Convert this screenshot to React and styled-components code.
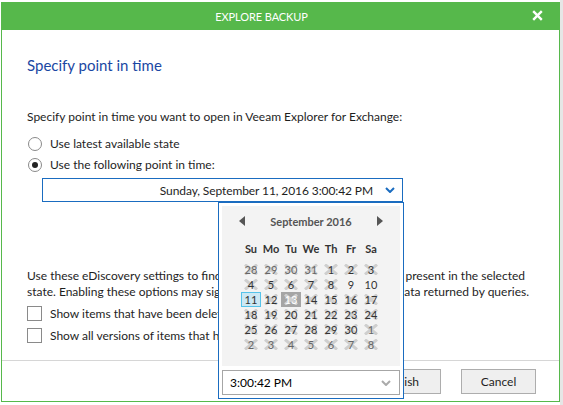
import React from 'react';
import styled, { createGlobalStyle } from 'styled-components';

const GlobalStyle = createGlobalStyle`
  html, body { margin: 0; padding: 0; }
  body {
    font-family: "Segoe UI", Lato, "Noto Sans", sans-serif;
    background: #fff;
  }
`;

const Page = styled.div`
  position: relative;
  width: 563px;
  height: 405px;
  overflow: hidden;
  background: linear-gradient(to right, #fff 0, #fff 560px, #e6e6e6 560px);
  padding: 2px 0 0 1px;
  box-sizing: border-box;
`;

const Window = styled.div`
  position: relative;
  width: 559px;
  height: 400px;
  display: flex;
  flex-direction: column;
  background: #fff;
`;

const TitleBar = styled.div`
  flex-shrink: 0;
  height: 28px;
  background: #56b84b;
  color: #fff;
  display: flex;
  align-items: center;
  justify-content: center;
  padding-right: 38px;
  font-size: 11px;
  letter-spacing: -0.1px;
  position: relative;
`;

const CloseBtn = styled.span`
  position: absolute;
  right: 17px;
  top: 8px;
  width: 11px;
  height: 11px;
  display: flex;
`;

const Body = styled.div`
  flex: 1;
  min-height: 0;
  border: 1px solid #56b84b;
  border-top: none;
  display: flex;
  flex-direction: column;
  position: relative;
`;

const Content = styled.div`
  flex: 1;
  min-height: 0;
  overflow: hidden;
  padding: 25px 0 0 25px;
  color: #1e1e1e;
  font-size: 12px;
`;

const Heading = styled.h2`
  margin: 0;
  font-weight: normal;
  font-size: 15px;
  line-height: 20px;
  color: #1a47a3;
`;

const Text = styled.p`
  margin: ${p => p.$top || 0}px 0 0;
  line-height: 16px;
`;

const Line = styled.div`
  display: flex;
  justify-content: space-between;
  white-space: nowrap;
  width: ${p => p.$w}px;
  line-height: 16px;
`;

const OptionRow = styled.label`
  display: flex;
  align-items: center;
  gap: 8px;
  height: ${p => p.$h || 21}px;
  margin-top: ${p => p.$top || 0}px;
`;

const Radio = styled.span`
  width: 12px;
  height: 12px;
  border-radius: 50%;
  border: 1px solid #8a8a8a;
  background: #fff;
  display: flex;
  align-items: center;
  justify-content: center;
  margin-left: 1px;
  &::after {
    content: '';
    width: 6px;
    height: 6px;
    border-radius: 50%;
    background: #222;
    display: ${p => (p.$checked ? 'block' : 'none')};
  }
`;

const Checkbox = styled.span`
  width: 13px;
  height: 13px;
  border: 1px solid #8a8a8a;
  background: #fff;
`;

const DateBox = styled.div`
  margin: 3px 0 0 15px;
  width: 352px;
  height: 22px;
  border: 1px solid #1a6cc0;
  display: flex;
  align-items: center;
  justify-content: flex-end;
  padding-right: 7px;
  gap: 12px;
  letter-spacing: -0.1px;
`;

const Footer = styled.div`
  flex-shrink: 0;
  box-sizing: border-box;
  height: 41px;
  border-top: 1px solid #d6d6d6;
  display: flex;
  justify-content: flex-end;
  align-items: flex-start;
  padding: 8px 23px 0 0;
  gap: 20px;
`;

const Button = styled.button`
  width: 75px;
  height: 25px;
  border: 1px solid #adadad;
  background: #efefef;
  font-family: inherit;
  font-size: 12px;
  color: #1e1e1e;
  padding: 0;
`;

const Popup = styled.div`
  position: absolute;
  left: 216px;
  top: 172px;
  width: 178px;
  height: 189px;
  border: 1px solid #1a6cc0;
  background: #fff;
  padding: 3px;
  display: flex;
  flex-direction: column;
  gap: 4px;
`;

const CalPanel = styled.div`
  flex: 1;
  background: #f3f3f3;
  display: flex;
  flex-direction: column;
  align-items: center;
`;

const MonthBar = styled.div`
  width: 100%;
  display: flex;
  align-items: center;
  justify-content: space-between;
  padding: 0 17px 0 17px;
  box-sizing: border-box;
  margin-top: 7px;
  height: 16px;
  font-weight: bold;
  font-size: 11px;
  color: #555;
`;

const Grid = styled.div`
  display: grid;
  grid-template-columns: repeat(7, 20px);
  grid-auto-rows: 15px;
  margin-top: ${p => p.$top}px;
  font-size: 11px;
`;

const DayHead = styled.div`
  text-align: center;
  font-weight: bold;
  color: #333;
  line-height: 15px;
`;

const Day = styled.div`
  position: relative;
  text-align: center;
  line-height: 15px;
  color: ${p => (p.$sel ? '#fff' : p.$other ? '#666' : '#333')};
  background: ${p => (p.$sel ? '#a5a5a5' : p.$today ? '#cce8f4' : 'transparent')};
  box-shadow: ${p => (p.$today ? 'inset 0 0 0 1px #56c3ea' : 'none')};
  & span { position: relative; }
`;

const Cross = styled.svg`
  position: absolute;
  left: 3px;
  top: 2px;
  width: 14px;
  height: 11px;
`;

const TimeBox = styled.div`
  height: 23px;
  border: 1px solid #a6a6a6;
  background: #fff;
  display: flex;
  align-items: center;
  justify-content: space-between;
  padding: 0 8px 0 7px;
  font-size: 12px;
`;

const Chevron = ({ color, size = 10 }) => (
  <svg width={size} height={size * 0.6} viewBox="0 0 10 6">
    <path d="M1 1 L5 5 L9 1" fill="none" stroke={color} strokeWidth="2" />
  </svg>
);

const Arrow = ({ dir }) => (
  <svg width="6" height="10" viewBox="0 0 6 10">
    <path d={dir === 'left' ? 'M6 0 L0 5 L6 10 Z' : 'M0 0 L6 5 L0 10 Z'} fill="#555" />
  </svg>
);

const weeks = [
  [28, 29, 30, 31, 1, 2, 3],
  [4, 5, 6, 7, 8, 9, 10],
  [11, 12, 13, 14, 15, 16, 17],
  [18, 19, 20, 21, 22, 23, 24],
  [25, 26, 27, 28, 29, 30, 1],
  [2, 3, 4, 5, 6, 7, 8],
];

const open = [9, 10, 11];

export default function App() {
  return (
    <Page>
      <GlobalStyle />
      <Window>
        <TitleBar>
          EXPLORE BACKUP
          <CloseBtn>
            <svg width="11" height="11" viewBox="0 0 11 11">
              <path d="M1.2 1.2 L9.8 9.8 M9.8 1.2 L1.2 9.8" stroke="#fff" strokeWidth="2.4" />
            </svg>
          </CloseBtn>
        </TitleBar>
        <Body>
          <Content>
            <Heading>Specify point in time</Heading>
            <Text $top={34}>Specify point in time you want to open in Veeam Explorer for Exchange:</Text>
            <OptionRow $top={8}>
              <Radio />
              Use latest available state
            </OptionRow>
            <OptionRow>
              <Radio $checked />
              Use the following point in time:
            </OptionRow>
            <DateBox>
              Sunday, September 11, 2016 3:00:42 PM
              <Chevron color="#1a6cc0" />
            </DateBox>
            <Text $top={66}>
              <Line $w={498}>
                <span>Use these eDiscovery settings to find items that are not</span>
                <span>present in the selected</span>
              </Line>
              <Line $w={502}>
                <span>state. Enabling these options may significantly increase the amount of</span>
                <span>data returned by queries.</span>
              </Line>
            </Text>
            <OptionRow $h={22} $top={2}>
              <Checkbox />
              Show items that have been deleted from the mailbox
            </OptionRow>
            <OptionRow $h={22}>
              <Checkbox />
              Show all versions of items that have been modified
            </OptionRow>
          </Content>
          <Footer>
            <Button>Finish</Button>
            <Button>Cancel</Button>
          </Footer>
          <Popup>
            <CalPanel>
              <MonthBar>
                <Arrow dir="left" />
                September 2016
                <Arrow dir="right" />
              </MonthBar>
              <Grid $top={12}>
                {['Su', 'Mo', 'Tu', 'We', 'Th', 'Fr', 'Sa'].map(d => (
                  <DayHead key={d}>{d}</DayHead>
                ))}
              </Grid>
              <Grid $top={6}>
                {weeks.map((w, wi) =>
                  w.map((d, di) => {
                    const inMonth = !(wi === 0 && d > 20) && !(wi >= 4 && d < 15);
                    const crossed = !(inMonth && open.includes(d));
                    return (
                      <Day
                        key={`${wi}-${di}`}
                        $other={!inMonth}
                        $today={inMonth && d === 11}
                        $sel={inMonth && d === 13}
                      >
                        {crossed && (
                          <Cross viewBox="0 0 14 11">
                            <path d="M1 0.5 L13 10.5 M13 0.5 L1 10.5" stroke="#cfcfcf" strokeWidth="3" />
                          </Cross>
                        )}
                        <span>{d}</span>
                      </Day>
                    );
                  })
                )}
              </Grid>
            </CalPanel>
            <TimeBox>
              3:00:42 PM
              <Chevron color="#aaa" />
            </TimeBox>
          </Popup>
        </Body>
      </Window>
    </Page>
  );
}
